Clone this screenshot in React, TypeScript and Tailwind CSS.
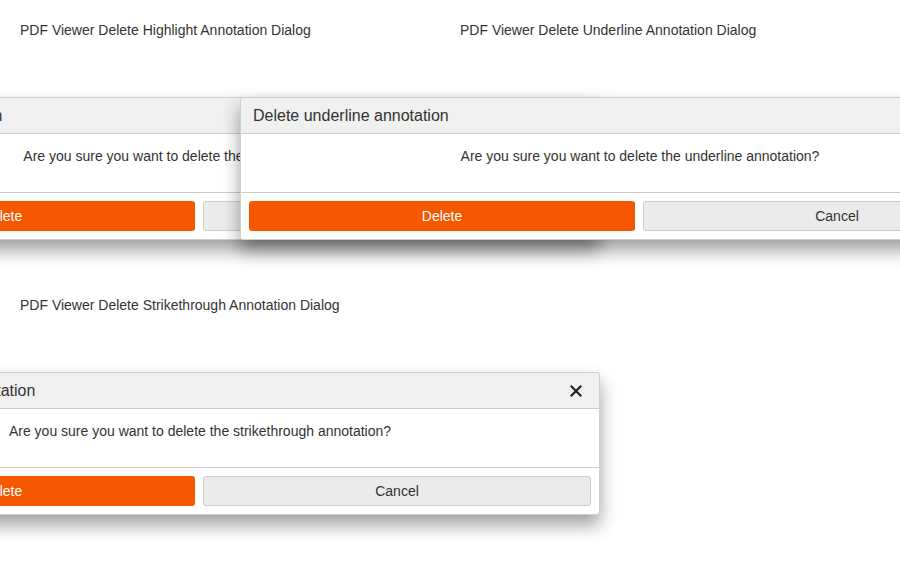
import React from "react";

type Demo = { label: string; kind: string };

const DEMOS: Demo[] = [
  { label: "PDF Viewer Delete Highlight Annotation Dialog", kind: "highlight" },
  { label: "PDF Viewer Delete Underline Annotation Dialog", kind: "underline" },
  { label: "PDF Viewer Delete Strikethrough Annotation Dialog", kind: "strikethrough" },
];

function CloseIcon() {
  return (
    <svg width="12" height="12" viewBox="0 0 12 12" className="text-[#222]">
      <path d="M1.5 1.5 L10.5 10.5 M10.5 1.5 L1.5 10.5" stroke="currentColor" strokeWidth="2.2" strokeLinecap="square" />
    </svg>
  );
}

function DeleteDialog({ kind }: { kind: string }) {
  return (
    <div className="relative ml-[-220px] w-[800px] bg-white border border-[#cfcfcf] rounded-[3px] shadow-[0_10px_18px_rgba(0,0,0,0.38)]">
      <div className="h-[36px] flex items-center justify-between pl-3 pr-[17px] bg-[#f0f0f0] border-b border-[#cccccc] rounded-t-[3px]">
        <span className="text-[16px] text-[#333]">Delete {kind} annotation</span>
        <CloseIcon />
      </div>
      <div className="h-[59px] pt-3 text-center text-[14px] leading-5 text-[#333] border-b border-[#cccccc]">
        Are you sure you want to delete the {kind} annotation?
      </div>
      <div className="flex gap-2 p-2">
        <button className="flex-1 h-[30px] rounded-[3px] bg-[#f65800] text-white text-[14px]">Delete</button>
        <button className="flex-1 h-[30px] rounded-[3px] bg-[#ebebeb] border border-[#cccccc] text-[#333] text-[14px]">Cancel</button>
      </div>
    </div>
  );
}

export default function App() {
  return (
    <div className="w-[900px] h-[570px] overflow-hidden bg-white font-['Liberation_Sans',Arial,sans-serif]">
      <div className="grid grid-cols-2 gap-x-5 px-5 pt-5">
        {DEMOS.map((d) => (
          <div key={d.kind} className="h-[275px]">
            <div className="h-5 leading-5 text-[14px] text-[#333]">{d.label}</div>
            <div className="mt-[57px]">
              <DeleteDialog kind={d.kind} />
            </div>
          </div>
        ))}
      </div>
    </div>
  );
}
